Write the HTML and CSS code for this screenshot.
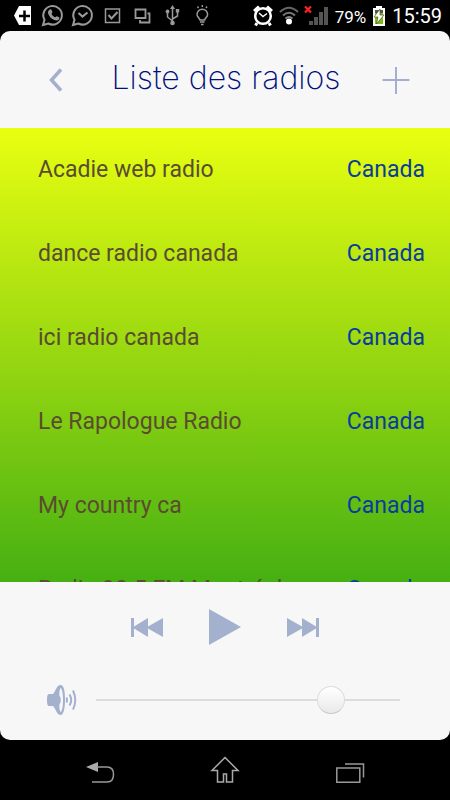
FILE: index.html
```html
<!DOCTYPE html>
<html lang="fr">
<head>
<meta charset="utf-8">
<meta name="viewport" content="width=device-width, initial-scale=1">
<title>Liste des radios</title>
<link rel="stylesheet" href="styles.css">
</head>
<body>
<div class="status">
  <div class="notifications">
    <svg viewBox="0 0 30 30" aria-hidden="true"><path fill="#fff" d="M6 15.500L11 6h12v19H11z"/><path stroke="#000" stroke-width="2.500" d="M16.500 10.500v11M11 16h11"/></svg>
    <svg viewBox="0 0 30 30" class="line" aria-hidden="true"><path d="M5 25l1.500-5.200a9.300 9.300 0 1 1 3.800 3.700z"/><path fill="#999" stroke="none" d="M11.500 9.800c1-.8 1.900-.5 2.200.4l.7 1.800c.2.700-.7 1.200-.9 1.700.8 1.700 2 2.900 3.800 3.600.7-.3 1-1.300 1.700-1l2 1c.8.400.4 1.700-.3 2.400-1.300 1.200-3.200.8-4.900 0-2.600-1.200-4.500-3.200-5.500-5.800-.6-1.700-.2-3.100 1.200-4.100z"/></svg>
    <svg viewBox="0 0 30 30" class="line" aria-hidden="true"><path d="M5 25l1.500-5.200a9.300 9.300 0 1 1 3.800 3.700z"/><path stroke-width="2.200" d="M10.500 13l4 3.500 5-4"/></svg>
    <svg viewBox="0 0 30 30" class="line" aria-hidden="true"><path stroke-width="1.500" d="M7.500 9h14v13.500h-14z"/><path stroke-width="2" d="M10.500 15l3 3.500 6-6.500"/></svg>
    <svg viewBox="0 0 30 30" class="line" aria-hidden="true"><path stroke-width="1.800" d="M7.500 9.500h10v8.500h-10zM19.500 13.500h2v9H12V20"/></svg>
    <svg viewBox="0 0 30 30" class="line" aria-hidden="true"><path stroke-width="1.500" d="M14.500 8v14M9.500 12.500V17l5 4M19.500 11v5l-5 3"/><g fill="#999" stroke="none"><path d="M12 9l2.500-4L17 9zM17.800 9h3.400v3.400h-3.400z"/><circle cx="9.500" cy="11.500" r="1.900"/><circle cx="14.500" cy="23" r="2.300"/></g></svg>
    <svg viewBox="0 0 30 30" class="line" aria-hidden="true"><path stroke-width="1.500" d="M12 20c0-2-3-2.500-3-5.500a5.300 5.300 0 0 1 10.600 0c0 3-3 3.500-3 5.500zM12 22h4.600M13 24.500h2.600M14.300 5v2M9.500 6.500l1 1.500M19 6.500L18 8"/></svg>
  </div>
  <div class="system">
    <svg class="alarm" viewBox="0 0 20 30" aria-hidden="true"><g fill="none" stroke="#fff"><circle cx="10" cy="16" r="7.800" stroke-width="2.500"/><path stroke-width="3" d="M1 11l5-4.500M19 11l-5-4.500M4 23l-1.500 2.500M16 23l1.500 2.500"/><path stroke-width="1.500" d="M6 13l4 3.500 4-3"/></g></svg>
    <svg class="wifi" viewBox="0 0 20 30" aria-hidden="true"><g fill="none" stroke="#666" stroke-width="2"><path d="M1 12q9-8.500 18 0"/><path d="M4 15.500q6-5.500 12 0" stroke="#777"/><path d="M6.500 18.500q3.500-3 7 0" stroke="#888"/></g><circle cx="10" cy="21.500" r="3" fill="#fff"/></svg>
    <svg class="signal" viewBox="0 0 24 30" aria-hidden="true"><path fill="#555" d="M4 21h4v4H4zM9 17h4v8H9zM14 12h4v13h-4zM19 7h4v18h-4z"/><path stroke="#f22" stroke-width="2.200" d="M0 6.500l6 6M6 6.500l-6 6"/></svg>
    <span class="percent">79%</span>
    <svg class="battery" viewBox="0 0 14 30" aria-hidden="true"><path fill="#fff" d="M4 6h6v2h3v18H1V8h3z"/><path fill="#555" d="M3 10h8v4H3z"/><path fill="#84b818" d="M3 13h8v11H3z"/><path fill="#fff" stroke="#33430d" stroke-width=".6" d="M8 9l-6 8h4l-1.500 7L12 15H8z"/></svg>
    <time class="clock">15:59</time>
  </div>
</div>
<main class="app">
  <header class="header">
    <button class="icon-button" type="button" aria-label="Retour"><svg width="60" height="60" viewBox="0 0 60 60"><path fill="none" stroke="#a3b1cf" stroke-width="3.500" d="M35 19.500L25.500 30 35 40.500"/></svg></button>
    <h1>Liste des radios</h1>
    <button class="icon-button" type="button" aria-label="Ajouter"><svg width="60" height="60" viewBox="0 0 60 60"><path fill="none" stroke="#a3b1cf" stroke-width="2" d="M30 17v27M16.500 30h27"/></svg></button>
  </header>
  <ul class="stations">
    <li><span>Acadie web radio</span><span class="country">Canada</span></li>
    <li><span>dance radio canada</span><span class="country">Canada</span></li>
    <li><span>ici radio canada</span><span class="country">Canada</span></li>
    <li><span>Le Rapologue Radio</span><span class="country">Canada</span></li>
    <li><span>My country ca</span><span class="country">Canada</span></li>
    <li><span>Radio 98.5 FM Montréal</span><span class="country">Canada</span></li>
  </ul>
  <section class="player" aria-label="Lecteur">
    <div class="controls">
      <button class="icon-button" type="button" aria-label="Précédent"><svg width="34" height="38" viewBox="0 0 34 38"><path fill="#a3b1cf" d="M1 10h3v8.500L18 10v8.500L33 10v19L18 20.500V29L4 20.500V29H1z"/></svg></button>
      <button class="icon-button" type="button" aria-label="Lecture"><svg width="34" height="38" viewBox="0 0 34 38"><path fill="#a3b1cf" d="M1 1l32 18L1 37z"/></svg></button>
      <button class="icon-button" type="button" aria-label="Suivant"><svg width="34" height="38" viewBox="0 0 34 38"><path fill="#a3b1cf" d="M33 10h-3v8.500L16 10v8.500L1 10v19l15-8.500V29l14-8.500V29h3z"/></svg></button>
    </div>
    <div class="volume">
      <label for="volume" aria-label="Volume"><svg width="30" height="32" viewBox="0 0 30 32"><path fill="#a3b1cf" fill-rule="evenodd" d="M2 10h4C9 7 9.500 1 13.500 1s4.500 8 4.500 15-1 15-4.500 15S9 25 6 22H2c-1.500 0-2-2-2-6s.5-6 2-6zm11.500-6c-1.200 2-1.300 5-1 8 1.700 1 1.700 7 0 8-.3 3-.2 6 1 8 2-1 2.500-7 2.500-12s-.5-11-2.500-12z"/><path fill="none" stroke="#a3b1cf" stroke-width="2" d="M19.500 13.500q1 2.500 0 5M22.500 10.500q3.500 5.500 0 11M26 6.500q4.500 9.500 0 19"/></svg></label>
      <input id="volume" type="range" min="0" max="100" value="80">
    </div>
  </section>
</main>
<nav class="navbar" aria-label="Système">
  <button class="icon-button" type="button" aria-label="Précédent"><svg width="40" height="40" viewBox="0 0 40 40"><path fill="#aaa" d="M6 17l12-5v10z"/><path fill="none" stroke="#999" stroke-width="1.500" d="M17 17h10q6.500 0 6.500 7.500T27 32H12"/></svg></button>
  <button class="icon-button" type="button" aria-label="Accueil"><svg width="40" height="40" viewBox="0 0 40 40"><path fill="none" stroke="#aaa" stroke-width="1.500" d="M7 20.500L20 7.500l13 13h-5.500V32h-6v-8h-3v8h-6V20.500z"/></svg></button>
  <button class="icon-button" type="button" aria-label="Applications récentes"><svg width="40" height="40" viewBox="0 0 40 40"><path fill="none" stroke="#999" stroke-width="1.500" d="M6.800 18h23v14.200h-23zM15 14h18.500v13.500"/></svg></button>
</nav>
</body>
</html>
```
FILE: styles.css
```css
* {
  box-sizing: border-box;
}

body {
  margin: 0;
  height: 100vh;
  display: flex;
  flex-direction: column;
  background: #000;
  font-family: Roboto, "Liberation Sans", sans-serif;
}

svg {
  display: block;
  flex: none;
}

.icon-button {
  display: block;
  padding: 0;
  border: 0;
  background: none;
  cursor: pointer;
}

.status {
  flex: none;
  height: 31px;
  display: flex;
  justify-content: space-between;
  padding: 0 8px;
  color: #fff;
}

.notifications,
.system {
  display: flex;
}

.status svg {
  height: 30px;
}

.notifications svg {
  width: 30px;
}

.line {
  fill: none;
  stroke: #999;
  stroke-width: 2;
}

.system {
  gap: 6px;
}

.alarm,
.wifi {
  width: 20px;
}

.signal {
  width: 24px;
  overflow: visible;
}

.battery {
  width: 14px;
}

.percent {
  font-size: 17px;
  line-height: 34px;
}

.clock {
  font-size: 20px;
  line-height: 32px;
}

.app {
  flex: 1;
  min-height: 0;
  display: flex;
  flex-direction: column;
  overflow: hidden;
  border-radius: 10px;
  background: #f7f7f7;
}

.header {
  flex: none;
  height: 97px;
  display: flex;
  align-items: center;
  justify-content: space-between;
  padding: 0 24px 0 26px;
}

h1 {
  margin: 0;
  padding-bottom: 4px;
  color: #00107c;
  font-family: Inter, "Open Sans", sans-serif;
  font-size: 32px;
  font-weight: 200;
  line-height: 40px;
  white-space: nowrap;
}

.stations {
  flex: 1;
  min-height: 0;
  margin: 0;
  padding: 0;
  overflow: hidden;
  list-style: none;
  background: linear-gradient(#e9ff10, #46b012);
}

.stations li {
  height: 84px;
  display: flex;
  justify-content: space-between;
  padding: 0 25px 0 38px;
  color: #5a4c30;
  font-size: 23px;
  line-height: 83px;
}

.stations .country {
  color: #0a3c9c;
}

.player {
  flex: none;
  padding-bottom: 12px;
}

.controls {
  height: 90px;
  display: flex;
  align-items: center;
  justify-content: center;
  gap: 44px;
}

.volume {
  height: 56px;
  display: flex;
  align-items: center;
  gap: 19px;
  padding: 0 50px 0 47px;
}

.volume input {
  flex: 1;
  min-width: 0;
  height: 28px;
  margin: 0;
  appearance: none;
  background: linear-gradient(#dcdcdc, #dcdcdc) center / 100% 2px no-repeat;
}

.volume input::-webkit-slider-thumb {
  appearance: none;
  width: 28px;
  height: 28px;
  border: 1px solid #ddd;
  border-bottom-color: #c8c8c8;
  border-radius: 50%;
  background: linear-gradient(#fff, #e9e9e9);
}

.navbar {
  flex: none;
  height: 60px;
  display: flex;
  align-items: center;
  justify-content: space-between;
  padding: 0 80px;
}
```
